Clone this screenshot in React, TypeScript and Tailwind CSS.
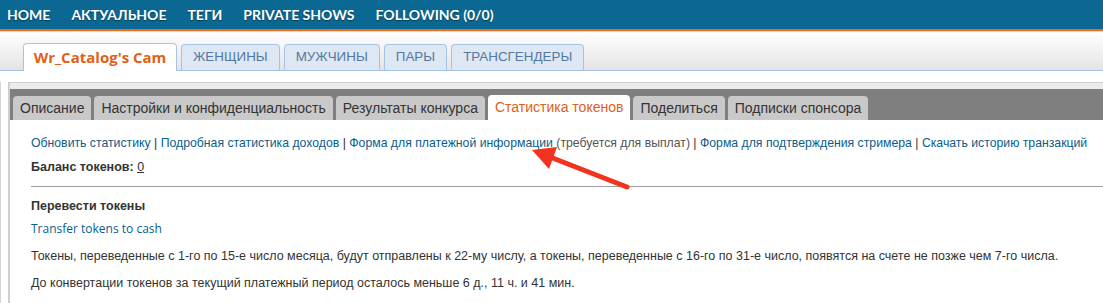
const navItems = ['HOME', 'АКТУАЛЬНОЕ', 'ТЕГИ', 'PRIVATE SHOWS', 'FOLLOWING (0/0)']

const genderTabs = ['ЖЕНЩИНЫ', 'МУЖЧИНЫ', 'ПАРЫ', 'ТРАНСГЕНДЕРЫ']

const panelTabs = [
  'Описание',
  'Настройки и конфиденциальность',
  'Результаты конкурса',
  'Статистика токенов',
  'Поделиться',
  'Подписки спонсора',
]

function Arrow() {
  return (
    <svg
      className="pointer-events-none absolute left-0 top-0"
      width="1103"
      height="303"
      viewBox="0 0 1103 303"
    >
      <line x1="627" y1="187" x2="550" y2="157" stroke="#f3321f" strokeWidth="5" strokeLinecap="round" />
      <polygon points="532,150 557,147 549,169" fill="#f3321f" />
    </svg>
  )
}

export default function App() {
  return (
    <div className="relative h-[303px] w-[1103px] overflow-hidden bg-white font-['Liberation_Sans',Arial,sans-serif]">
      {/* top nav */}
      <div className="flex h-[29px] items-center gap-[21px] bg-[#0b6892] pl-[7px] font-['Lato',sans-serif] text-[14px] font-bold text-white [text-shadow:0_1px_1px_rgba(0,0,0,0.45)]">
        {navItems.map((item) => (
          <span key={item}>{item}</span>
        ))}
      </div>
      <div className="h-[2px] bg-[#f26b1d]" />
      <div className="h-[1px] bg-[#fbdcc8]" />

      {/* camera / gender tabs */}
      <div className="flex h-[39px] items-end gap-[4px] border-b border-[#a8c4e4] bg-gradient-to-b from-white to-[#e4e4e4] pl-[23px]">
        <div className="-mb-px flex h-[28px] w-[154px] items-center justify-center rounded-t-[4px] border border-b-0 border-[#a8c4e4] bg-white font-['Open_Sans',sans-serif] text-[15px] font-bold text-[#df6119]">
          Wr_Catalog's Cam
        </div>
        {genderTabs.map((t) => (
          <div
            key={t}
            className="flex h-[26px] items-center rounded-t-[4px] border border-b-0 border-[#a8c4e4] bg-[#dde8f4] px-[11px] text-[13.4px] text-[#55789f]"
          >
            {t}
          </div>
        ))}
      </div>

      {/* panel */}
      <div className="mt-[11px] border-l border-[#d4d4d4] pl-[7px]">
        <div className="border-l-2 border-t border-[#cfcfcf] bg-[#ececec] pt-[6px]">
          <div className="flex h-[31px] items-end gap-[3px] bg-[#7f7f7f] pl-[3px]">
            {panelTabs.map((t, i) => (
              <div
                key={t}
                className={
                  i === 3
                    ? 'flex h-[25px] items-center rounded-t-[4px] bg-white px-[7px] text-[14px] text-[#e0601a]'
                    : 'flex h-[24px] items-center rounded-t-[4px] bg-[#c9c9c9] px-[7px] text-[14px] text-[#333]'
                }
              >
                {t}
              </div>
            ))}
          </div>

          <div className="bg-white pb-[20px] pl-[21px] text-[12.5px] leading-[16px] text-[#333]">
            <div className="whitespace-nowrap pt-[15px] text-[12.25px]">
              <a className="text-[#0b5d8a]">Обновить статистику</a> | <a className="text-[#0b5d8a]">Подробная статистика доходов</a> |{' '}
              <a className="text-[#0b5d8a]">Форма для платежной информации</a>{' '}
              <span className="text-[#555]">(требуется для выплат)</span> |{' '}
              <a className="text-[#0b5d8a]">Форма для подтверждения стримера</a> |{' '}
              <a className="text-[#0b5d8a]">Скачать историю транзакций</a>
            </div>
            <div className="mt-[8px]">
              <span className="font-bold">Баланс токенов:</span> <span className="underline">0</span>
            </div>
            <div className="mt-[11px] h-px bg-[#a0a0a0]" />
            <div className="mt-[11px] font-bold">Перевести токены</div>
            <div className="mt-[7px] font-['Open_Sans',sans-serif] text-[12px] text-[#0b5d8a]">Transfer tokens to cash</div>
            <div className="mt-[11px]">
              Токены, переведенные с 1-го по 15-е число месяца, будут отправлены к 22-му числу, а токены, переведенные с
              16-го по 31-е число, появятся на счете не позже чем 7-го числа.
            </div>
            <div className="mt-[11px]">До конвертации токенов за текущий платежный период осталось меньше 6 д., 11 ч. и 41 мин.</div>
          </div>
        </div>
      </div>

      <Arrow />
    </div>
  )
}
